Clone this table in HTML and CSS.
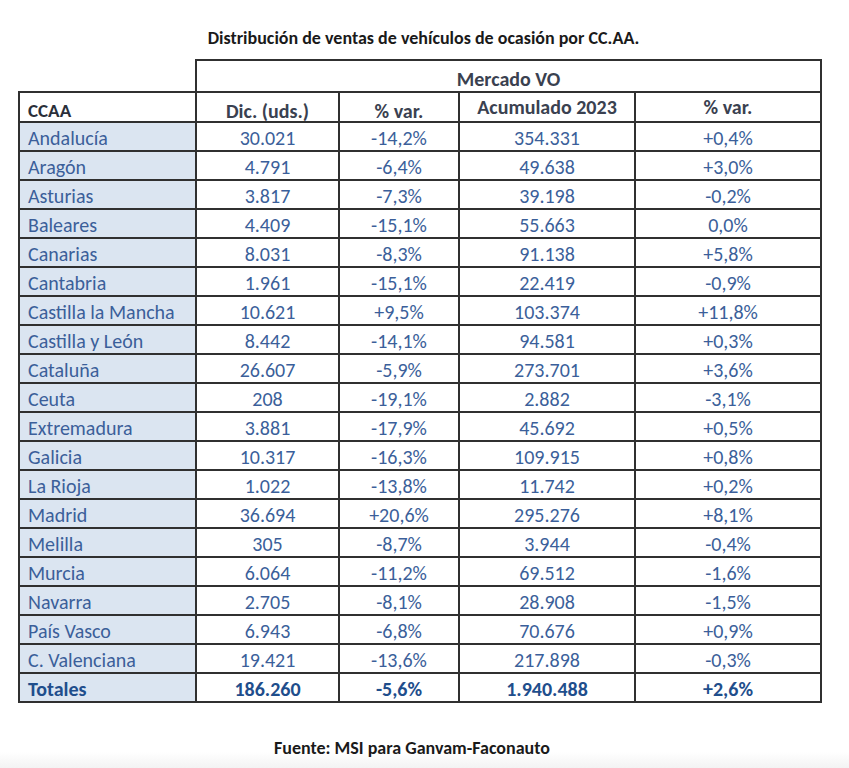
FILE: index.html
```html
<!DOCTYPE html>
<html lang="es">
<head>
<meta charset="utf-8">
<link rel="stylesheet" href="styles.css">
</head>
<body>
<div class="page">
  <h1 class="title">Distribución de ventas de vehículos de ocasión por CC.AA.</h1>
  <table class="vo">
    <colgroup>
      <col class="c1"><col class="c2"><col class="c3"><col class="c4"><col class="c5">
    </colgroup>
    <tr class="h1">
      <td class="blank"></td>
      <th colspan="4" class="market">Mercado VO</th>
    </tr>
    <tr class="h2">
      <th class="name low">CCAA</th>
      <th class="low">Dic. (uds.)</th>
      <th class="low">% var.</th>
      <th class="high">Acumulado 2023</th>
      <th class="high">% var.</th>
    </tr>
    <tr><td class="name">Andalucía</td><td>30.021</td><td>-14,2%</td><td>354.331</td><td>+0,4%</td></tr>
    <tr><td class="name">Aragón</td><td>4.791</td><td>-6,4%</td><td>49.638</td><td>+3,0%</td></tr>
    <tr><td class="name">Asturias</td><td>3.817</td><td>-7,3%</td><td>39.198</td><td>-0,2%</td></tr>
    <tr><td class="name">Baleares</td><td>4.409</td><td>-15,1%</td><td>55.663</td><td>0,0%</td></tr>
    <tr><td class="name">Canarias</td><td>8.031</td><td>-8,3%</td><td>91.138</td><td>+5,8%</td></tr>
    <tr><td class="name">Cantabria</td><td>1.961</td><td>-15,1%</td><td>22.419</td><td>-0,9%</td></tr>
    <tr><td class="name">Castilla la Mancha</td><td>10.621</td><td>+9,5%</td><td>103.374</td><td>+11,8%</td></tr>
    <tr><td class="name">Castilla y León</td><td>8.442</td><td>-14,1%</td><td>94.581</td><td>+0,3%</td></tr>
    <tr><td class="name">Cataluña</td><td>26.607</td><td>-5,9%</td><td>273.701</td><td>+3,6%</td></tr>
    <tr><td class="name">Ceuta</td><td>208</td><td>-19,1%</td><td>2.882</td><td>-3,1%</td></tr>
    <tr><td class="name">Extremadura</td><td>3.881</td><td>-17,9%</td><td>45.692</td><td>+0,5%</td></tr>
    <tr><td class="name">Galicia</td><td>10.317</td><td>-16,3%</td><td>109.915</td><td>+0,8%</td></tr>
    <tr><td class="name">La Rioja</td><td>1.022</td><td>-13,8%</td><td>11.742</td><td>+0,2%</td></tr>
    <tr><td class="name">Madrid</td><td>36.694</td><td>+20,6%</td><td>295.276</td><td>+8,1%</td></tr>
    <tr><td class="name">Melilla</td><td>305</td><td>-8,7%</td><td>3.944</td><td>-0,4%</td></tr>
    <tr><td class="name">Murcia</td><td>6.064</td><td>-11,2%</td><td>69.512</td><td>-1,6%</td></tr>
    <tr><td class="name">Navarra</td><td>2.705</td><td>-8,1%</td><td>28.908</td><td>-1,5%</td></tr>
    <tr><td class="name">País Vasco</td><td>6.943</td><td>-6,8%</td><td>70.676</td><td>+0,9%</td></tr>
    <tr><td class="name">C. Valenciana</td><td>19.421</td><td>-13,6%</td><td>217.898</td><td>-0,3%</td></tr>
    <tr class="total"><td class="name">Totales</td><td>186.260</td><td>-5,6%</td><td>1.940.488</td><td>+2,6%</td></tr>
  </table>
  <p class="source">Fuente: MSI para Ganvam-Faconauto</p>
</div>
</body>
</html>
```
FILE: styles.css
```css
html, body {
  margin: 0;
  padding: 0;
  background: #ffffff;
}
.page {
  width: 849px;
  height: 768px;
  box-sizing: border-box;
  padding-top: 27px;
  font-family: Carlito, "Liberation Sans", sans-serif;
  background: linear-gradient(#ffffff 0, #ffffff 752px, #f3f3f3 768px);
}
.title {
  margin: 0;
  text-align: center;
  font-size: 18px;
  line-height: 22px;
  font-weight: bold;
  color: #1a1a1a;
  padding-right: 2px;
}
.vo {
  margin: 10px 0 0 18px;
  border-collapse: collapse;
  table-layout: fixed;
  width: 802px;
}
.c1 { width: 177px; }
.c2 { width: 143px; }
.c3 { width: 120px; }
.c4 { width: 176px; }
.c5 { width: 186px; }
.vo td, .vo th {
  border: 2px solid #303030;
  padding: 3px 0 0 0;
  text-align: center;
  font-size: 20px;
  color: #3b5f9a;
  font-weight: normal;
  height: 24px;
  line-height: 22px;
}
.vo td.blank {
  border-top: none;
  border-left: none;
}
.vo .h1 th {
  height: 24px;
  padding-top: 6px;
  color: #3a4150;
  font-weight: bold;
  font-size: 20px;
}
.vo .h2 th {
  height: 28px;
  padding-top: 0;
  color: #3a4150;
  font-weight: bold;
  font-size: 20px;
}
.vo .h2 th.low { vertical-align: bottom; line-height: 20px; }
.vo .h2 th.high { vertical-align: top; line-height: 24px; padding-top: 2px; height: 26px; }
.vo .h2 th.name { font-size: 19px; color: #2a2f3a; }
.vo .name {
  text-align: left;
  padding-left: 8px;
  background: #dbe5f1;
}
.vo .h2 .name { background: #ffffff; }
.vo .total td {
  height: 24px;
  font-weight: bold;
  color: #1f4e8c;
}
.source {
  margin: 34px 0 0 0;
  padding-right: 25px;
  text-align: center;
  font-size: 18px;
  line-height: 22px;
  font-weight: bold;
  color: #1a1a1a;
}
```
